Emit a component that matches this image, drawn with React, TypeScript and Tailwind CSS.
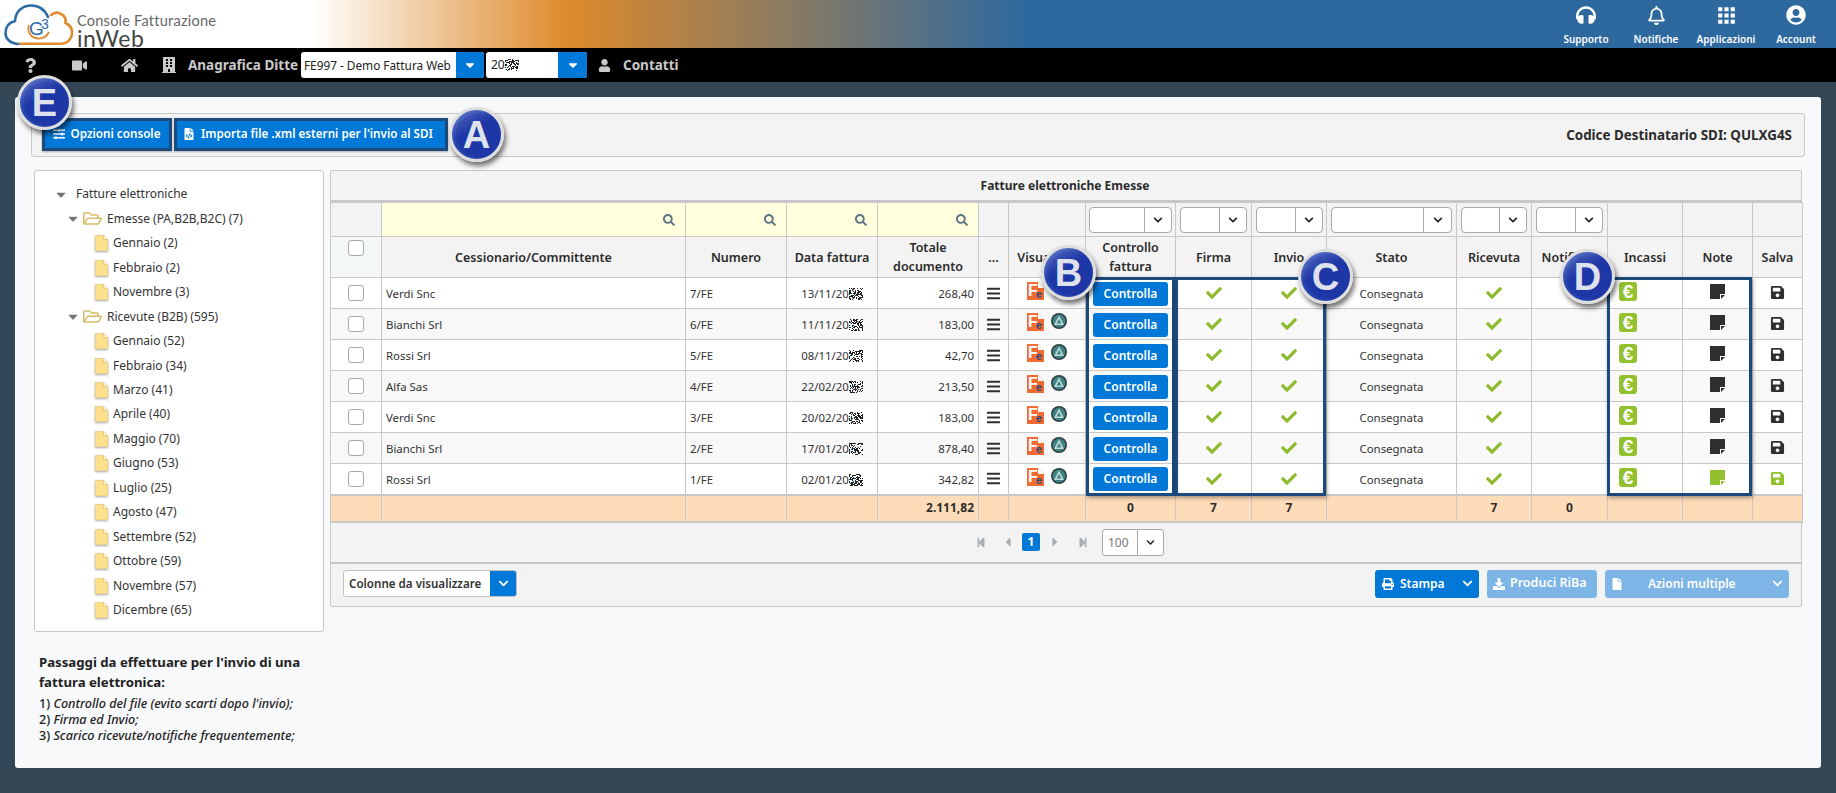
import React from "react";
import { FaHeadphones, FaRegBell, FaUserCircle, FaQuestion, FaVideo, FaHome, FaBuilding, FaUser, FaSearch, FaBars, FaCheck, FaSave, FaPrint, FaDownload, FaFile, FaFileCode, FaSlidersH, FaCaretDown, FaChevronDown, FaStepBackward, FaStepForward, FaCaretLeft, FaCaretRight, FaRegFolderOpen } from "react-icons/fa";
import { MdApps } from "react-icons/md";

function Noise({ seed = 7 }: { seed?: number }) {
  let s = seed * 7919 + 13;
  let d = "";
  for (let y = 0; y < 12; y++)
    for (let x = 0; x < 14; x++) {
      s = (s * 1103515245 + 12345) & 0x7fffffff;
      if ((s >> 16) % 100 < 48) d += `M${x} ${y}h1v1h-1z`;
    }
  return (
    <svg width="14" height="12" viewBox="0 0 14 12" className="inline-block align-[-2px]">
      <path d={d} fill="#222" />
    </svg>
  );
}

function Logo() {
  return (
    <svg width="76" height="48" viewBox="0 0 76 48" className="shrink-0">
      <path d="M19 44 C10 44 5.5 38.5 5.5 33 C5.500 27 9 22.500 15 21 C15.500 11 23 5.500 31 5.500 C39 5.500 45 10 48 17" fill="none" stroke="#2c6da5" strokeWidth="2.6" strokeLinecap="round" />
      <path d="M51 15 C54 12.500 58 12 61 14 C65 16 66 20 65.500 23 C70 25 72.500 29 72 34 C71.500 39.500 67 43.500 62 43.800 L20 43.800" fill="none" stroke="#e18a2e" strokeWidth="2.6" strokeLinecap="round" />
      <path d="M29 25 C27 31 30 38 38 38.500 C43 38.800 47 36 49 32" fill="none" stroke="#e18a2e" strokeWidth="1.8" />
      <text x="29" y="35" fontFamily="Liberation Sans, sans-serif" fontSize="19" fill="#2c6da5">G</text>
      <text x="41" y="29" fontFamily="Liberation Sans, sans-serif" fontSize="14" fill="#2c6da5">3</text>
    </svg>
  );
}

function FeIcon() {
  return (
    <svg width="17" height="18" viewBox="0 0 17 18" className="shrink-0">
      <path d="M0 0h11l6 6v12H0z" fill="#f26b35" />
      <path d="M11 0l6 6h-6z" fill="#fff" />
      <text x="1" y="13.500" fontFamily="Liberation Sans, sans-serif" fontWeight="700" fontSize="16" fill="#fff">F</text>
      <text x="9" y="16" fontFamily="Liberation Sans, sans-serif" fontWeight="700" fontSize="11" fill="#234a7a">e</text>
    </svg>
  );
}

function SealIcon() {
  return (
    <svg width="16" height="16" viewBox="0 0 16 16" className="shrink-0">
      <circle cx="8" cy="8" r="8" fill="#2f3f40" />
      <circle cx="8" cy="8" r="6.400" fill="#3f8482" />
      <path d="M8 2.600L13 12H3zM8 6L5.600 10.600h4.800z" fill="#dfeeee" fillRule="evenodd" opacity="0.8" />
    </svg>
  );
}

function NoteIcon({ green }: { green: boolean }) {
  const fill = green ? "#93c02d" : "#2f2f2f";
  return (
    <svg width="15" height="15" viewBox="0 0 15 15" className="mx-auto mb-[3px]">
      <path d="M0 0h15v10h-5v5H0z" fill={fill} />
      <path d="M11 11h4l-4 4z" fill={fill} />
    </svg>
  );
}

function Badge({ letter, cls }: { letter: string; cls: string }) {
  return (
    <div className={`absolute w-[55px] h-[55px] rounded-full z-20 flex items-center justify-center border-[3px] border-[#dedede] shadow-[2px_4px_5px_rgba(0,0,0,0.55)] bg-[linear-gradient(150deg,rgba(255,255,255,0.25),rgba(255,255,255,0)_42%),radial-gradient(ellipse_at_58%_52%,#1e37a6_0%,#1e37a6_58%,#3f63c4_82%,#6a8bd8_100%)] ${cls}`}>
      <span className="font-['Liberation_Sans',sans-serif] font-bold text-[38px] leading-none text-[#dfe2ec]">{letter}</span>
    </div>
  );
}

function FilterSelect({ w, arrow }: { w: string; arrow: string }) {
  return (
    <div className={`${w} h-[26px] mx-auto flex bg-white border border-[#a9a9a9] rounded-[4px]`}>
      <div className="flex-1" />
      <div className={`${arrow} h-full border-l border-[#a9a9a9] flex items-center justify-center text-[#222]`}>
        <FaChevronDown className="text-[10px]" />
      </div>
    </div>
  );
}

const months1 = ["Gennaio (2)", "Febbraio (2)", "Novembre (3)"];
const months2 = ["Gennaio (52)", "Febbraio (34)", "Marzo (41)", "Aprile (40)", "Maggio (70)", "Giugno (53)", "Luglio (25)", "Agosto (47)", "Settembre (52)", "Ottobre (59)", "Novembre (57)", "Dicembre (65)"];

function Leaf({ label }: { label: string }) {
  return (
    <div className="h-[24.47px] flex items-center pl-[60px] gap-[5px]">
      <svg width="13" height="16" viewBox="0 0 13 16" className="shrink-0 drop-shadow-[0_1px_1px_rgba(0,0,0,0.35)]">
        <path d="M0.500 0.500h8l4 4v11h-12z" fill="#fddf8c" stroke="#e8d48f" strokeWidth="1" />
        <path d="M8.500 0.500v4h4" fill="#fff3c9" stroke="#d8c27a" strokeWidth="0.800" />
      </svg>
      <span>{label}</span>
    </div>
  );
}

function Branch({ label }: { label: string }) {
  return (
    <div className="h-[24.47px] flex items-center pl-[32px]">
      <FaCaretDown className="text-[15px] text-[#777] w-[12px] shrink-0" />
      <FaRegFolderOpen className="text-[19px] text-[#d9bd6d] ml-[4px] mr-[5px] shrink-0" />
      <span>{label}</span>
    </div>
  );
}

const rows = [
  ["Verdi Snc", "7/FE", "13/11/20", "268,40"],
  ["Bianchi Srl", "6/FE", "11/11/20", "183,00"],
  ["Rossi Srl", "5/FE", "08/11/20", "42,70"],
  ["Alfa Sas", "4/FE", "22/02/20", "213,50"],
  ["Verdi Snc", "3/FE", "20/02/20", "183,00"],
  ["Bianchi Srl", "2/FE", "17/01/20", "878,40"],
  ["Rossi Srl", "1/FE", "02/01/20", "342,82"],
];

const td = "border border-[#c8c8c8] p-0";
const tx = "border border-[#c8c8c8] p-0 pt-[1px] text-[11.4px]";
const th = "border border-[#c8c8c8] p-0 font-semibold text-[#2b2b2b] text-center text-[12.5px] leading-[19px] align-middle bg-[#f3f3f3]";
const fo = "border border-[#c8c8c8] border-y-2 p-0 font-bold text-[#2b2b2b] text-center bg-[#ffdcb9]";

function TopItem({ icon, label }: { icon: React.ReactNode; label: string }) {
  return (
    <div className="w-[70px] h-12 flex flex-col items-center text-white">
      <div className="h-[30px] flex items-center justify-center">{icon}</div>
      <div className="text-[10px] font-semibold leading-none mt-[4px]">{label}</div>
    </div>
  );
}

function Search() {
  return (
    <td className={`${td} bg-[#ffffdd] text-right pr-[10px]`}>
      <FaSearch className="inline text-[12px] text-[#5d7484]" />
    </td>
  );
}

export default function App() {
  return (
    <div className="relative w-[1836px] h-[793px] overflow-hidden bg-[#344756] font-['Noto_Sans',sans-serif] text-[12px] text-[#333]">
      {/* top bar */}
      <header className="h-12 flex justify-between bg-[linear-gradient(90deg,#ffffff_17%,#dd8a2b_31%,#2d699f_56%)]">
        <div className="flex items-start pl-0">
          <Logo />
          <div className="ml-[1px] pt-[13px] font-['Lato',sans-serif] text-[#666]">
            <div className="text-[14.600px] leading-[16px] tracking-[0.2px]">Console Fatturazione</div>
            <div className="text-[23px] leading-[19px] text-[#444] tracking-[0.5px]">inWeb</div>
          </div>
        </div>
        <div className="flex pr-[5px]">
          <TopItem icon={<FaHeadphones className="text-[20px]" />} label="Supporto" />
          <TopItem icon={<FaRegBell className="text-[19px]" />} label="Notifiche" />
          <TopItem icon={<MdApps className="text-[25px]" />} label="Applicazioni" />
          <TopItem icon={<FaUserCircle className="text-[20px]" />} label="Account" />
        </div>
      </header>

      {/* nav bar */}
      <nav className="h-[34px] bg-black flex items-center text-[#c9c9c9] text-[13.500px] font-bold">
        <span className="ml-[20px] w-[20px] flex justify-center"><FaQuestion className="text-[15px]" /></span>
        <span className="ml-[29px] w-[20px] flex justify-center"><FaVideo className="text-[15px]" /></span>
        <span className="ml-[30px] w-[20px] flex justify-center"><FaHome className="text-[17px]" /></span>
        <span className="ml-[22px] w-[16px] flex justify-center"><FaBuilding className="text-[16px]" /></span>
        <span className="ml-[11px] w-[113px] whitespace-nowrap">Anagrafica Ditte</span>
        <div className="w-[183px] h-[26px] flex rounded-[3px] overflow-hidden bg-white text-[#222] text-[11.800px] font-normal">
          <span className="flex-1 pl-[3px] leading-[26px] whitespace-nowrap overflow-hidden">FE997 - Demo Fattura Web</span>
          <span className="w-[28px] bg-[#0078d7] flex items-center justify-center text-white"><FaCaretDown className="text-[14px]" /></span>
        </div>
        <div className="ml-[2px] w-[101px] h-[26px] flex rounded-[3px] overflow-hidden bg-white text-[#222] text-[12px] font-normal">
          <span className="flex-1 pl-[5px] leading-[26px]">20<Noise seed={3} /></span>
          <span className="w-[29px] bg-[#0078d7] flex items-center justify-center text-white"><FaCaretDown className="text-[14px]" /></span>
        </div>
        <FaUser className="ml-[11px] text-[13px]" />
        <span className="ml-[12px]">Contatti</span>
      </nav>

      {/* main panel */}
      <main className="pt-[15px] pl-[15px]">
        <div className="w-[1806px] h-[671px] bg-[#f8f9fa] rounded-[3px] pt-[16px] pl-[16px]">
          <div className="w-[1774px] h-[44px] bg-[#f3f3f3] border border-[#c8c8c8] rounded-[3px] flex items-center justify-between pl-[10px] pr-[12px]">
            <div className="flex gap-[2px] mt-[-2px]">
              <button className="w-[130px] h-[33px] bg-[#0078d7] border-[3px] border-[#1c4a7d] text-white font-semibold text-[11.700px] flex items-center justify-center gap-[5px] shadow-[0_1px_2px_rgba(0,0,0,0.3)]">
                <FaSlidersH className="text-[12px]" />Opzioni console
              </button>
              <button className="w-[274px] h-[33px] bg-[#0078d7] border-[3px] border-[#1c4a7d] text-white font-semibold text-[11.650px] flex items-center gap-[6px] pl-[6px] shadow-[0_1px_2px_rgba(0,0,0,0.3)]">
                <FaFileCode className="text-[12px]" />Importa file .xml esterni per l'invio al SDI
              </button>
            </div>
            <div className="font-bold text-[13.400px] text-[#2b2b2b]">Codice Destinatario SDI: QULXG4S</div>
          </div>

          <div className="flex mt-[13px]">
            {/* left column */}
            <div className="w-[290px] ml-[3px] shrink-0">
              <div className="h-[462px] bg-white border border-[#c8c8c8] rounded-[3px] pt-[11px]">
                <div className="h-[24.47px] flex items-center pl-[20px]">
                  <FaCaretDown className="text-[15px] text-[#777] w-[12px] shrink-0" />
                  <span className="ml-[9px]">Fatture elettroniche</span>
                </div>
                <Branch label="Emesse (PA,B2B,B2C) (7)" />
                {months1.map((m) => <Leaf key={m} label={m} />)}
                <Branch label="Ricevute (B2B) (595)" />
                {months2.map((m) => <Leaf key={m} label={m} />)}
              </div>
              <div className="pl-[5px] pt-[21px] text-[#222]">
                <div className="font-bold text-[13.200px] leading-[19.500px]">Passaggi da effettuare per l'invio di una<br />fattura elettronica:</div>
                <div className="text-[12.600px] leading-[16px] mt-[4px] font-medium">
                  <div>1) <i>Controllo del file (evito scarti dopo l'invio);</i></div>
                  <div>2) <i>Firma ed Invio;</i></div>
                  <div>3) <i>Scarico ricevute/notifiche frequentemente;</i></div>
                </div>
              </div>
            </div>

            {/* grid */}
            <div className="w-[1472px] ml-[6px] shrink-0">
              <div className="h-[32px] bg-[#f3f3f3] border border-[#c8c8c8] border-b-2 rounded-t-[2px] flex items-center justify-center font-bold text-[12px] text-[#2b2b2b] pr-[2px]">Fatture elettroniche Emesse</div>
              <table className="w-[1472px] table-fixed border-collapse">
                <colgroup>
                  {["w-[51px]", "w-[304px]", "w-[101px]", "w-[91px]", "w-[101px]", "w-[30px]", "w-[77px]", "w-[90px]", "w-[76px]", "w-[75px]", "w-[130px]", "w-[75px]", "w-[76px]", "w-[75px]", "w-[70px]", "w-[50px]"].map((c, i) => <col key={i} className={c} />)}
                </colgroup>
                <thead>
                  <tr className="h-[34px]">
                    <td className={`${td} bg-[#f3f3f3]`} />
                    <Search /><Search /><Search /><Search />
                    <td className={`${td} bg-[#f3f3f3]`} />
                    <td className={`${td} bg-[#f3f3f3]`} />
                    <td className={`${td} bg-[#f3f3f3]`}><FilterSelect w="w-[83px]" arrow="w-[27px]" /></td>
                    <td className={`${td} bg-[#f3f3f3]`}><FilterSelect w="w-[67px]" arrow="w-[27px]" /></td>
                    <td className={`${td} bg-[#f3f3f3]`}><FilterSelect w="w-[67px]" arrow="w-[27px]" /></td>
                    <td className={`${td} bg-[#f3f3f3]`}><FilterSelect w="w-[121px]" arrow="w-[28px]" /></td>
                    <td className={`${td} bg-[#f3f3f3]`}><FilterSelect w="w-[66px]" arrow="w-[27px]" /></td>
                    <td className={`${td} bg-[#f3f3f3]`}><FilterSelect w="w-[67px]" arrow="w-[27px]" /></td>
                    <td className={`${td} bg-[#f3f3f3]`} />
                    <td className={`${td} bg-[#f3f3f3]`} />
                    <td className={`${td} bg-[#f3f3f3]`} />
                  </tr>
                  <tr className="h-[41px]">
                    <th className={`${th} !bg-[#f4f7f8] align-top pt-[3px]`}>
                      <div className="w-[16px] h-[16px] mx-auto bg-white border border-[#a9a9a9] rounded-[3px]" />
                    </th>
                    <th className={th}>Cessionario/Committente</th>
                    <th className={th}>Numero</th>
                    <th className={th}>Data fattura</th>
                    <th className={th}>Totale<br />documento</th>
                    <th className={th}>...</th>
                    <th className={th}>Visualizza</th>
                    <th className={th}>Controllo<br />fattura</th>
                    <th className={th}>Firma</th>
                    <th className={th}>Invio</th>
                    <th className={th}>Stato</th>
                    <th className={th}>Ricevuta</th>
                    <th className={th}>Notifiche</th>
                    <th className={th}>Incassi</th>
                    <th className={th}>Note</th>
                    <th className={th}>Salva</th>
                  </tr>
                </thead>
                <tbody>
                  {rows.map((r, i) => {
                    const last = i === rows.length - 1;
                    const bg = i % 2 === 0 ? "bg-white" : "bg-[#f8f8f8]";
                    return (
                      <tr key={i} className={`h-[31px] ${bg}`}>
                        <td className={td}><div className="w-[16px] h-[16px] mx-auto bg-white border border-[#a9a9a9] rounded-[3px]" /></td>
                        <td className={`${tx} pl-[4px]`}>{r[0]}</td>
                        <td className={`${tx} pl-[4px]`}>{r[1]}</td>
                        <td className={`${tx} text-center`}>{r[2]}<Noise seed={i + 11} /></td>
                        <td className={`${tx} text-right pr-[4px]`}>{r[3]}</td>
                        <td className={td}><FaBars className="mx-auto text-[15px] text-[#2f2f2f]" /></td>
                        <td className={td}><div className="flex items-start justify-center gap-[7px] pb-[4px] pr-[1px]"><FeIcon /><SealIcon /></div></td>
                        <td className={td}>
                          <div className="w-[75px] h-[24px] mt-[1px] mx-auto bg-[#0078d7] rounded-[3px] text-white font-semibold text-[12px] flex items-center justify-center">Controlla</div>
                        </td>
                        <td className={td}><FaCheck className="mx-auto text-[16px] text-[#8dbb2d]" /></td>
                        <td className={td}><FaCheck className="mx-auto text-[16px] text-[#8dbb2d]" /></td>
                        <td className={`${tx} text-center`}>Consegnata</td>
                        <td className={td}><FaCheck className="mx-auto text-[16px] text-[#8dbb2d]" /></td>
                        <td className={td} />
                        <td className={`${td} pl-[11px]`}>
                          <div className="w-[18px] h-[19px] mb-[3px] bg-[#93c02d] rounded-[3px] text-white font-bold text-[19px] leading-[19px] text-center font-['Liberation_Sans',sans-serif]">€</div>
                        </td>
                        <td className={td}><NoteIcon green={last} /></td>
                        <td className={td}><FaSave className={`mx-auto mb-[1px] text-[15px] ${last ? "text-[#93c02d]" : "text-[#2f2f2f]"}`} /></td>
                      </tr>
                    );
                  })}
                  <tr className="h-[27px]">
                    <td className={fo} /><td className={fo} /><td className={fo} /><td className={fo} />
                    <td className={`${fo} !text-right pr-[4px]`}>2.111,82</td>
                    <td className={fo} /><td className={fo} />
                    <td className={fo}>0</td><td className={fo}>7</td><td className={fo}>7</td>
                    <td className={fo} />
                    <td className={fo}>7</td><td className={fo}>0</td>
                    <td className={fo} /><td className={fo} /><td className={fo} />
                  </tr>
                </tbody>
              </table>
              <div className="h-[41px] bg-[#f3f3f3] border-x border-b-2 border-[#c8c8c8] flex items-center pl-[643px] text-[#a6adb3] text-[11px]">
                <FaStepBackward className="w-[14px]" />
                <FaCaretLeft className="ml-[13px] w-[14px] text-[14px]" />
                <span className="ml-[7px] w-[18px] h-[18px] bg-[#0078d7] rounded-[2px] text-white font-bold text-[12px] leading-[18px] text-center">1</span>
                <FaCaretRight className="ml-[8px] w-[14px] text-[14px]" />
                <FaStepForward className="ml-[14px] w-[14px]" />
                <div className="ml-[12px] w-[62px] h-[27px] flex bg-white border border-[#a9a9a9] rounded-[3px] text-[#777] text-[12px]">
                  <span className="w-[34px] pl-[5px] leading-[25px]">100</span>
                  <span className="flex-1 border-l border-[#a9a9a9] flex items-center justify-center text-[#222]"><FaChevronDown className="text-[9px]" /></span>
                </div>
              </div>
              <div className="h-[43px] bg-[#f3f3f3] border-x border-b border-[#c8c8c8] rounded-b-[3px] flex items-center justify-between pl-[12px] pr-[12px] pb-[2px]">
                <div className="w-[174px] h-[27px] flex bg-white border border-[#c0c0c0] rounded-[3px] overflow-hidden font-semibold text-[#333] text-[11.600px]">
                  <span className="flex-1 pl-[5px] leading-[25px] whitespace-nowrap">Colonne da visualizzare</span>
                  <span className="w-[26px] bg-[#0078d7] text-white flex items-center justify-center"><FaChevronDown className="text-[11px]" /></span>
                </div>
                <div className="flex gap-[8px] text-white font-semibold text-[12px]">
                  <div className="w-[104px] h-[28px] bg-[#0078d7] rounded-[3px] flex items-center pl-[7px]">
                    <FaPrint className="text-[12px]" /><span className="ml-[6px]">Stampa</span><FaChevronDown className="ml-auto mr-[6px] text-[11px]" />
                  </div>
                  <div className="w-[110px] h-[28px] bg-[#7db5e6] rounded-[3px] flex items-center pl-[6px]">
                    <FaDownload className="text-[12px]" /><span className="ml-[5px] text-[12.500px]">Produci RiBa</span>
                  </div>
                  <div className="w-[184px] h-[28px] bg-[#7db5e6] rounded-[3px] flex items-center pl-[6px]">
                    <FaFile className="text-[12px]" /><span className="ml-[25px]">Azioni multiple</span><FaChevronDown className="ml-auto mr-[6px] text-[11px]" />
                  </div>
                </div>
              </div>
            </div>
          </div>
        </div>
      </main>

      {/* annotation frames */}
      <div className="absolute left-[1086px] top-[277px] w-[89px] h-[219px] border-[3px] border-[#1c4a7d] shadow-[1px_2px_4px_rgba(0,0,0,0.35)] z-10" />
      <div className="absolute left-[1175px] top-[277px] w-[151px] h-[219px] border-[3px] border-[#1c4a7d] shadow-[1px_2px_4px_rgba(0,0,0,0.35)] z-10" />
      <div className="absolute left-[1607px] top-[277px] w-[145px] h-[219px] border-[3px] border-[#1c4a7d] shadow-[1px_2px_4px_rgba(0,0,0,0.35)] z-10" />

      <Badge letter="E" cls="left-[17px] top-[75px]" />
      <Badge letter="A" cls="left-[449px] top-[107px]" />
      <Badge letter="B" cls="left-[1041px] top-[245px]" />
      <Badge letter="C" cls="left-[1298px] top-[249px]" />
      <Badge letter="D" cls="left-[1560px] top-[249px]" />
    </div>
  );
}
